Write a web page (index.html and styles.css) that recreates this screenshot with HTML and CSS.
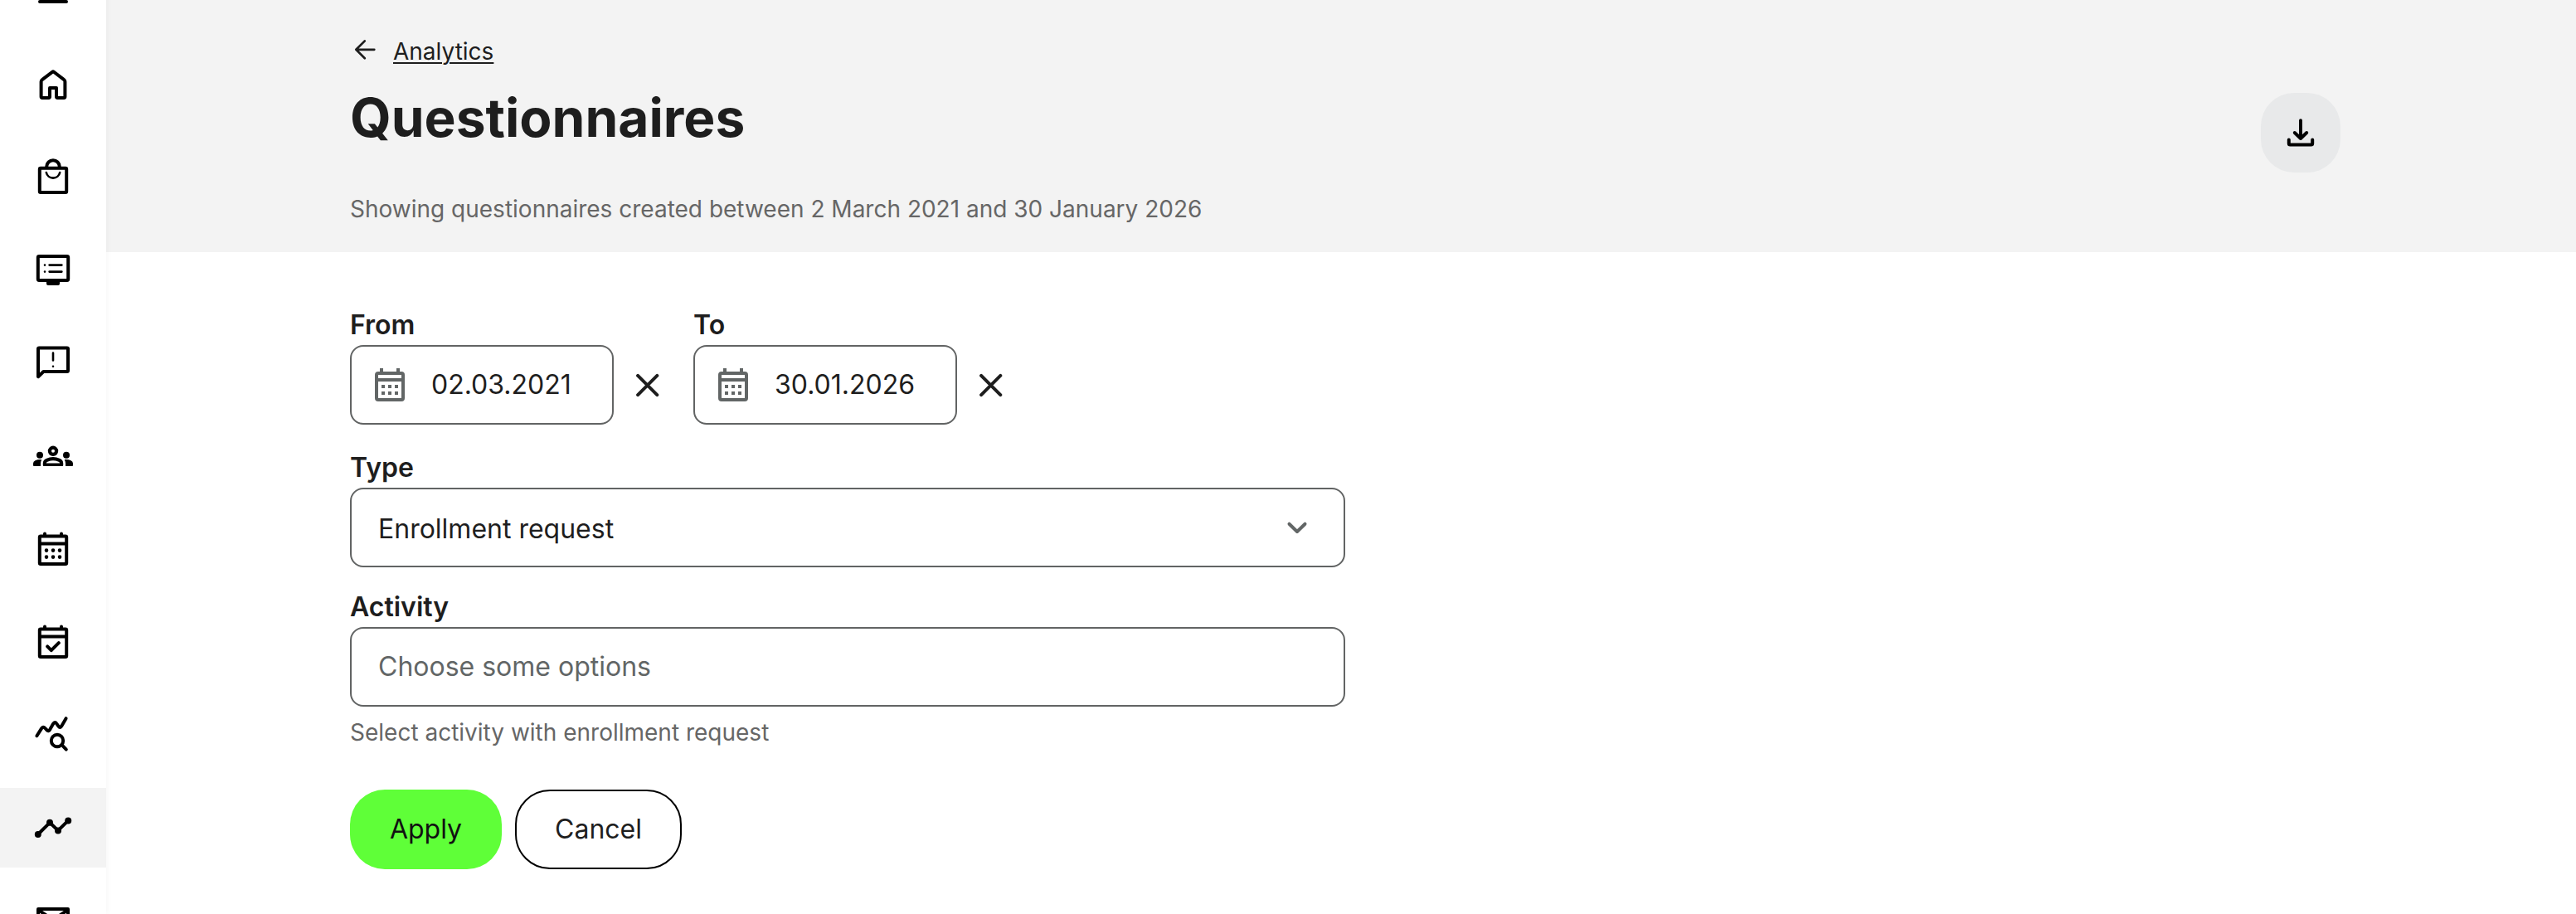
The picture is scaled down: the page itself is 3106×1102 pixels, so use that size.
FILE: index.html
```html
<!DOCTYPE html>
<html lang="en">
<head>
<meta charset="utf-8">
<title>Questionnaires</title>
<link rel="stylesheet" href="styles.css">
</head>
<body>
<div class="app">
  <nav class="sidebar">
    <a class="nav-item"><svg class="icon" viewBox="0 0 24 24"><path d="M4 6h16M4 12h16M4 18h16"/></svg></a>
    <a class="nav-item"><svg class="icon" viewBox="0 0 24 24"><path d="M5.4 9.1 11.5 4.4q.5-.4 1 0l6.1 4.7q.6.4.6 1.1v9.1q0 .7-.7.7H14.7q-.7 0-.7-.7V14h-4v5.3q0 .7-.7.7H5.5q-.7 0-.7-.7v-9.1q0-.7.6-1.1z"/></svg></a>
    <a class="nav-item"><svg class="icon" viewBox="0 0 24 24"><path d="M4.5 6.4h15q.6 0 .6.6v13.4q0 .6-.6.6h-15q-.6 0-.6-.6V7q0-.6.6-.6zM8.1 6.2v-.7a3.9 3.9 0 0 1 7.8 0v.7"/><path class="thin" d="M7.9 9a4.2 4.2 0 0 0 8.2 0"/></svg></a>
    <a class="nav-item"><svg class="icon" viewBox="0 0 24 24"><path d="M3.6 3.5h16.8q.7 0 .7.7v13.1q0 .7-.7.7H3.6q-.7 0-.7-.7V4.2q0-.7.7-.7z"/><path class="thin" d="M9.8 8.8h7.4M9.8 12.8h7.4M7 8.8h.01M7 12.8h.01"/><path class="solid" d="M8 18h8v2a1 1 0 0 1-1 1H9a1 1 0 0 1-1-1z"/></svg></a>
    <a class="nav-item"><svg class="icon" viewBox="0 0 24 24"><path d="M3.6 2.7h16.8q.6 0 .6.6v13.1q0 .6-.6.6H6.2L3 20.1V3.3q0-.6.6-.6z"/><path class="thin" d="M12 5.8v4.4M12 13.9v.01"/></svg></a>
    <a class="nav-item"><svg class="icon" viewBox="0 0 24 24"><path class="solid" d="M4 13.4a2 2 0 1 0 0-4 2 2 0 0 0 0 4zm1.13.7A7 7 0 0 0 4 14c-.99 0-1.93.21-2.78.58A2 2 0 0 0 0 16.43V17.5q0 .5.5.5h4v-1.61c0-.83.23-1.61.63-2.29zM20 13.4a2 2 0 1 0 0-4 2 2 0 0 0 0 4zm4 3.03a2 2 0 0 0-1.22-1.85A7 7 0 0 0 20 14c-.39 0-.76.04-1.13.1.4.68.63 1.46.63 2.29V18h4q.5 0 .5-.5zM16.24 13.45a10.5 10.5 0 0 0-8.48 0A3.1 3.1 0 0 0 5.9 16.3v1.2q0 .5.5.5h11.2q.5 0 .5-.5v-1.2a3.1 3.1 0 0 0-1.86-2.85zM7.9 16.2c.09-.33.2-.6 1.08-.94a8.3 8.3 0 0 1 6.04 0c.87.34.98.61 1.08.94zM12 7.9a1 1 0 1 1 0 2 1 1 0 0 1 0-2m0-2.1a3.1 3.1 0 1 0 0 6.2 3.1 3.1 0 0 0 0-6.2z"/></svg></a>
    <a class="nav-item"><svg class="icon" viewBox="0 0 24 24"><path d="M4.5 4.2h15q.6 0 .6.6v15.6q0 .6-.6.6h-15q-.6 0-.6-.6V4.8q0-.6.6-.6zM7 2.8v1.4M17 2.8v1.4M3.9 8.8h16.2"/><path class="dots" d="M8 12.8h.01M12 12.8h.01M16 12.8h.01M8 16.8h.01M12 16.8h.01M16 16.8h.01"/></svg></a>
    <a class="nav-item"><svg class="icon" viewBox="0 0 24 24"><path d="M4.5 4.2h15q.6 0 .6.6v15.6q0 .6-.6.6h-15q-.6 0-.6-.6V4.8q0-.6.6-.6zM7 2.8v1.4M17 2.8v1.4M3.9 8.8h16.2M8.6 14.7l2.3 2.4 4.5-4.5"/></svg></a>
    <a class="nav-item"><svg class="icon" viewBox="0 0 24 24"><path d="M2.2 12.6 5 8.2q1-1.6 2.2-.2l1 1.1q1 1.1 1.9-.3l2-3.5q1-1.6 2-.1l1.2 1.7q.9 1.2 1.8-.2l2.7-4.6M18 18.8l1.9 2"/><circle cx="14.5" cy="15.5" r="3.6"/></svg></a>
    <a class="nav-item active"><svg class="icon" viewBox="0 0 24 24"><path d="M2.9 16 10 8.9l5 4.8 6.1-6"/><g class="solid"><circle cx="2.9" cy="16" r="2"/><circle cx="10" cy="8.9" r="2"/><circle cx="15" cy="13.7" r="2"/><circle cx="21.1" cy="7.7" r="2"/></g></svg></a>
    <a class="nav-item"><svg class="icon" viewBox="0 0 24 24"><path d="M3 5h18v14H3zM3 5.5l9 6 9-6"/></svg></a>
  </nav>
  <main class="main">
    <header class="page-header">
      <div class="breadcrumb">
        <svg class="back" viewBox="0 0 36 36"><path d="M29.3 15.8H7.4M17.8 5.4 7.3 15.8l10.5 10.4"/></svg>
        <a class="crumb">Analytics</a>
      </div>
      <div class="title-row">
        <h1 class="title">Questionnaires</h1>
        <button class="download"><svg class="icon" viewBox="0 0 24 24"><path d="M12 4.6v10.6M8.4 12l3.6 3.5 3.6-3.5M4.9 16.2v2.3q0 .8.8.8h12.6q.8 0 .8-.8v-2.3"/></svg></button>
      </div>
      <p class="subtitle">Showing questionnaires created between 2 March 2021 and 30 January 2026</p>
    </header>
    <form class="filters">
      <div class="dates">
        <div class="field">
          <label class="label">From</label>
          <div class="date-row">
            <div class="control date"><svg class="cal" viewBox="0 0 24 24"><path d="M6 2h2v2h8V2h2v2h1a2 2 0 0 1 2 2v14a2 2 0 0 1-2 2H5a2 2 0 0 1-2-2V6a2 2 0 0 1 2-2h1zM5 6v2h14V6zm0 4v10h14V10zm2 2h2v2H7zm4 0h2v2h-2zm4 0h2v2h-2zm-8 4h2v2H7zm4 0h2v2h-2zm4 0h2v2h-2z"/></svg><span class="date-text">02.03.2021</span></div>
            <svg class="clear" viewBox="0 0 29 29"><path d="M3.1 2.9l23.2 23.2M26.3 2.9 3.1 26.1"/></svg>
          </div>
        </div>
        <div class="field">
          <label class="label">To</label>
          <div class="date-row">
            <div class="control date"><svg class="cal" viewBox="0 0 24 24"><path d="M6 2h2v2h8V2h2v2h1a2 2 0 0 1 2 2v14a2 2 0 0 1-2 2H5a2 2 0 0 1-2-2V6a2 2 0 0 1 2-2h1zM5 6v2h14V6zm0 4v10h14V10zm2 2h2v2H7zm4 0h2v2h-2zm4 0h2v2h-2zm-8 4h2v2H7zm4 0h2v2h-2zm4 0h2v2h-2z"/></svg><span class="date-text">30.01.2026</span></div>
            <svg class="clear" viewBox="0 0 29 29"><path d="M3.1 2.9l23.2 23.2M26.3 2.9 3.1 26.1"/></svg>
          </div>
        </div>
      </div>
      <div class="field type">
        <label class="label">Type</label>
        <div class="control select"><span class="select-text">Enrollment request</span><svg class="chevron" viewBox="0 0 28 20"><path d="M4.5 4.7 14 14l9.5-9.3"/></svg></div>
      </div>
      <div class="field">
        <label class="label">Activity</label>
        <div class="control select"><span class="placeholder">Choose some options</span></div>
        <p class="help">Select activity with enrollment request</p>
      </div>
      <div class="actions">
        <button type="button" class="btn apply">Apply</button>
        <button type="button" class="btn cancel">Cancel</button>
      </div>
    </form>
  </main>
</div>
</body>
</html>
```
FILE: styles.css
```css
* { box-sizing: border-box; }
body {
  margin: 0;
  background: #fff;
  color: #1e1e1e;
  font: 400 32px/48px Inter, "Liberation Sans", sans-serif;
}
h1, p { margin: 0; }
svg { display: block; flex: none; fill: none; stroke: currentColor; stroke-linecap: round; stroke-linejoin: round; }
button { border: 0; margin: 0; padding: 0; font: inherit; color: inherit; }
.app { display: flex; height: 1102px; overflow: hidden; }

.sidebar {
  position: relative;
  z-index: 1;
  flex: none;
  width: 128px;
  background: #fff;
  box-shadow: 0 0 8px rgba(0, 0, 0, 0.05);
  display: flex;
  flex-direction: column;
  gap: 16px;
  margin-top: -58px;
}
.nav-item { display: flex; flex: none; align-items: center; justify-content: center; height: 96px; color: #000; }
.active { background: #f3f3f3; }
.icon { width: 48px; height: 48px; stroke-width: 2; }
.thin { stroke-width: 1.3; }
.dots { stroke-width: 2.3; }
.solid { fill: currentColor; stroke: none; }

.main { flex: 1; }
.page-header { height: 304px; padding: 38px 284px 0 294px; background: #f3f3f3; }
.breadcrumb { display: flex; height: 48px; gap: 16px; align-items: center; font-size: 28px; }
.back { width: 36px; height: 36px; stroke-width: 2.7; }
.crumb { text-decoration: underline; text-decoration-thickness: 2px; text-underline-offset: 3px; }
.title-row { display: flex; justify-content: space-between; height: 132px; padding-top: 16px; }
.title { font-size: 64px; line-height: 80px; font-weight: 700; }
.download {
  display: flex; align-items: center; justify-content: center;
  width: 96px; height: 96px; margin-top: 10px;
  border-radius: 40px; background: #e8e9ea; color: #000;
}
.subtitle { font-size: 28px; line-height: 40px; padding-top: 14px; color: #666; }

.filters { padding: 68px 0 0 294px; }
.label { display: block; height: 44px; line-height: 40px; font-weight: 600; }
.dates { display: flex; gap: 41px; }
.date-row { display: flex; align-items: center; gap: 26px; }
.control { display: flex; align-items: center; height: 96px; border: 2px solid #626464; border-radius: 16px; }
.date { width: 318px; padding-left: 22px; }
.cal { width: 48px; height: 48px; fill: #626666; fill-rule: evenodd; stroke: none; }
.date-text { padding-left: 26px; }
.clear { width: 29px; height: 29px; stroke-width: 4; }
.field { flex: none; }
.type { margin: 32px 0 28px; }
.select { width: 1200px; justify-content: space-between; padding: 4px 42px 0 32px; }
.select .placeholder { color: #626666; margin-top: -4px; }
.chevron { width: 28px; height: 20px; stroke-width: 4; color: #626666; margin-top: -2px; }
.help { font-size: 28px; line-height: 40px; padding-top: 11px; color: #666; }
.actions { display: flex; gap: 16px; margin-top: 49px; }
.btn { height: 96px; border-radius: 42px; }
.apply { width: 183px; background: #5fff38; color: #111; }
.cancel { width: 201px; background: #fff; border: 2px solid #000; }
```
